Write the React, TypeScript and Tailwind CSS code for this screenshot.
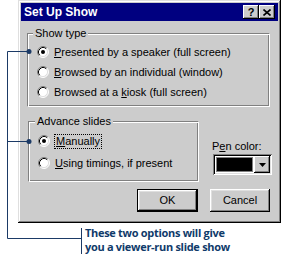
import React from "react";

const Radio = ({ checked }: { checked?: boolean }) => (
  <svg width="12" height="12" viewBox="0 0 12 12" className="shrink-0">
    <circle cx="6" cy="6" r="5" fill="#fff" />
    <path d="M2.11 9.89 A5.5 5.5 0 0 1 9.89 2.11" fill="none" stroke="#808080" strokeWidth="1" />
    <path d="M9.89 2.11 A5.5 5.5 0 0 1 2.11 9.89" fill="none" stroke="#fff" strokeWidth="1" />
    <path d="M2.82 9.18 A4.5 4.5 0 0 1 9.18 2.82" fill="none" stroke="#000" strokeWidth="1" />
    <path d="M9.18 2.82 A4.5 4.5 0 0 1 2.82 9.18" fill="none" stroke="#dfdfdf" strokeWidth="1" />
    {checked && <circle cx="6" cy="6" r="2" fill="#000" />}
  </svg>
);

const Row = ({ checked, children, h = "h-[20px]" }: { checked?: boolean; children: React.ReactNode; h?: string }) => (
  <div className={`flex items-center ${h}`}>
    <Radio checked={checked} />
    <div className="ml-[5px] leading-[13px]">{children}</div>
  </div>
);

export default function App() {
  return (
    <div className="relative w-[300px] h-[254px] bg-white overflow-hidden">
      <div className="flex flex-col">
        {/* Dialog */}
        <div className="ml-[18px] w-[263px] h-[223px] bg-[#cccccc] p-[3px] shadow-[inset_-1px_-1px_0_#000,inset_1px_1px_0_#dfdfdf,inset_-2px_-2px_0_#808080,inset_2px_2px_0_#fff] font-['Liberation_Sans',Arial,sans-serif] text-[11px] text-black flex flex-col">
          {/* Title bar */}
          <div className="h-[18px] bg-[#000080] flex items-center pl-[3px] pr-[3px]">
            <span className="text-white font-bold text-[12px] leading-[18px]">Set Up Show</span>
            <div className="ml-auto flex">
              <div className="w-[16px] h-[14px] bg-[#cccccc] shadow-[inset_-1px_-1px_0_#000,inset_1px_1px_0_#fff,inset_-2px_-2px_0_#808080] flex items-center justify-center text-[11px] font-bold leading-none">?</div>
              <div className="w-[16px] h-[14px] bg-[#cccccc] shadow-[inset_-1px_-1px_0_#000,inset_1px_1px_0_#fff,inset_-2px_-2px_0_#808080] flex items-center justify-center">
                <svg width="8" height="7" viewBox="0 0 8 7">
                  <path d="M0.5 0.5 L7.5 6.5 M7.5 0.5 L0.5 6.5" stroke="#000" strokeWidth="1.6" />
                </svg>
              </div>
            </div>
          </div>

          {/* Show type group */}
          <div className="relative ml-[6px] mt-[12px] w-[243px] border border-t-[#808080] border-l-[#808080] border-b-white border-r-white shadow-[inset_1px_1px_0_#fff,inset_-1px_-1px_0_#808080] pl-[9px] pt-[8px] pb-[4px]">
            <span className="absolute top-[-7px] left-[5px] px-[2px] bg-[#cccccc] leading-[13px]">Show type</span>
            <Row checked>
              <u>P</u>resented by a speaker (full screen)
            </Row>
            <Row>
              <u>B</u>rowsed by an individual (window)
            </Row>
            <Row>
              Browsed at a <u>k</u>iosk (full screen)
            </Row>
          </div>

          {/* Advance slides + pen color */}
          <div className="flex mt-[14px]">
            <div className="relative ml-[7px] w-[171px] border border-t-[#808080] border-l-[#808080] border-b-white border-r-white shadow-[inset_1px_1px_0_#fff,inset_-1px_-1px_0_#808080] pl-[9px] pt-[8px] pb-[7px]">
              <span className="absolute top-[-7px] left-[6px] px-[2px] bg-[#cccccc] leading-[13px]">Advance slides</span>
              <div className="flex items-center h-[22px]">
                <Radio checked />
                <div className="ml-[4px] h-[15px] px-[1px] border border-dotted border-black flex items-center leading-[13px]">
                  <span><u>M</u>anually</span>
                </div>
              </div>
              <Row h="h-[22px]">
                <u>U</u>sing timings, if present
              </Row>
            </div>
            <div className="ml-[13px] flex flex-col">
              <div className="mt-[19px] leading-[13px]">
                P<u>e</u>n color:
              </div>
              <div className="mt-[1px] ml-[1px] w-[59px] h-[21px] bg-white shadow-[inset_1px_1px_0_#808080,inset_-1px_-1px_0_#fff,inset_2px_2px_0_#000,inset_-2px_-2px_0_#dfdfdf] p-[2px] flex">
                <div className="m-[1px] flex-1 bg-black border border-[#808080]"></div>
                <div className="w-[16px] bg-[#cccccc] shadow-[inset_-1px_-1px_0_#000,inset_1px_1px_0_#fff,inset_-2px_-2px_0_#808080] flex items-center justify-center">
                  <svg width="7" height="4" viewBox="0 0 7 4">
                    <path d="M0 0 H7 L3.5 4 Z" fill="#000" />
                  </svg>
                </div>
              </div>
            </div>
          </div>

          {/* Buttons */}
          <div className="flex mt-[7px]">
            <div className="ml-[116px] w-[61px] h-[23px] border border-black shadow-[inset_-1px_-1px_0_#000,inset_1px_1px_0_#fff,inset_-2px_-2px_0_#808080,inset_2px_2px_0_#dfdfdf] flex items-center justify-center">
              OK
            </div>
            <div className="ml-[12px] w-[60px] h-[23px] shadow-[inset_-1px_-1px_0_#000,inset_1px_1px_0_#fff,inset_-2px_-2px_0_#808080,inset_2px_2px_0_#dfdfdf] flex items-center justify-center">
              Cancel
            </div>
          </div>
        </div>

        {/* Caption */}
        <div className="ml-[85px] mt-[3px] font-['Open_Sans',sans-serif] font-bold text-[11px] leading-[14px] tracking-[-0.3px] text-[#0f3a6a]">
          <div>These two options will give</div>
          <div>you a viewer-run slide show</div>
        </div>
      </div>

      {/* Callout lines */}
      <svg className="absolute left-0 top-0 pointer-events-none" width="300" height="254" viewBox="0 0 300 254">
        <g stroke="#1b3a66" strokeWidth="1" fill="none">
          <path d="M7.5 51.5 V238.5 H81.5" />
          <path d="M7.5 51.5 H28" />
          <path d="M7.5 141.5 H28" />
          <path d="M81.5 228 V254" />
        </g>
        <circle cx="29" cy="51.5" r="2.5" fill="#1b3a66" />
        <circle cx="29" cy="141.5" r="2.5" fill="#1b3a66" />
      </svg>
    </div>
  );
}
